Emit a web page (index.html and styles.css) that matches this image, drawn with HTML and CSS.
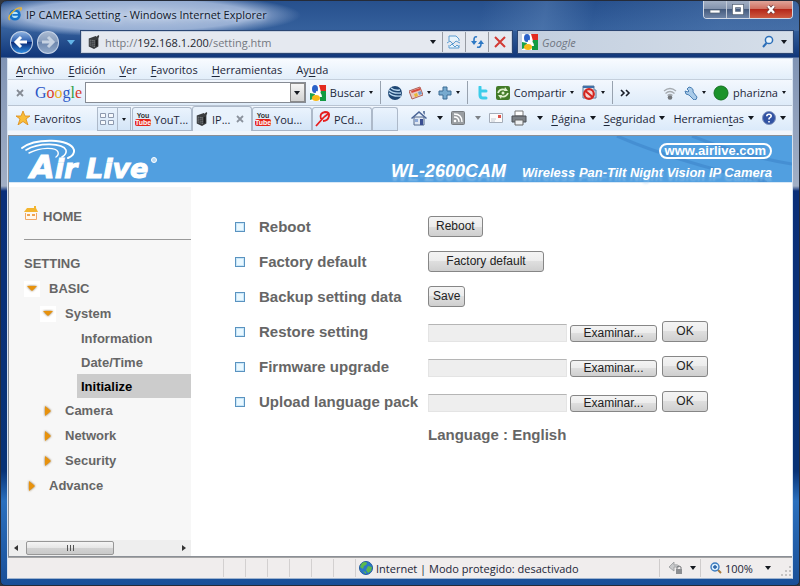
FILE: index.html
```
<!DOCTYPE html>
<html lang="es">
  <head>
    <meta charset="UTF-8" />
    <meta name="viewport" content="width=device-width, initial-scale=1.0" />
    <title>IP CAMERA Setting</title>
    <link rel="stylesheet" href="styles.css" />
  </head>

  <body>
    <!-- shared icons -->
    <svg class="sprite" aria-hidden="true">
      <symbol id="camera" viewBox="0 0 14 16">
        <path d="M1 4 9 1l1 1 2-2 1 1-1 3v9l-5 3-6-3z" fill="#3a3c3e" />
        <path d="M2 5l6 1v8l-6-2z" fill="#777b7e" />
        <path d="M2 7l6 1M2 9l6 1M2 11l6 1M4 5v8M6 6v8" stroke="#303234" stroke-width=".7" />
        <path d="M9 6l2-1v7l-2 1z" fill="#1d1e20" />
      </symbol>
      <symbol id="gicon" viewBox="0 0 16 16">
        <path d="M0 0h16v16H0z" fill="#fff" />
        <path d="M9 0h7v7h-5z" fill="#e32b20" />
        <path d="M11 6h5v10h-6V9z" fill="#129a42" />
        <path d="M0 8l5 1-2 5-3 1z" fill="#19a24c" />
        <ellipse cx="5" cy="4" rx="3" ry="4" fill="#2b62c9" />
        <ellipse cx="6" cy="13" rx="4" ry="3" fill="#f8b917" />
        <path d="M6 7q5 1 5 5" stroke="#fff" stroke-width="2" fill="none" />
      </symbol>
      <symbol id="box" viewBox="0 0 10 10">
        <rect x=".5" y=".5" width="9" height="9" fill="#c8e6f8" stroke="#5a93c0" />
        <path d="M2 2h6v6H2z" fill="#eaf8ff" />
      </symbol>
    </svg>

    <div class="window">
      <header class="titlebar">
        <svg class="i14" viewBox="0 0 16 16">
          <circle cx="8" cy="9" r="5" fill="#b9e4fb" stroke="#1673c8" stroke-width="3" />
          <path d="M5 9h9" stroke="#1673c8" stroke-width="2" />
          <path d="M2 15C-2 11 9 0 15 1q1 1-1 3" fill="none" stroke="#f0b72d" stroke-width="1.5" />
        </svg>
        <span class="title">IP CAMERA Setting - Windows Internet Explorer</span>
        <div class="controls">
          <button aria-label="Minimizar"><svg viewBox="0 0 12 12"><path d="M1 6h10v3H1z" fill="#fff" stroke="#526174" stroke-width=".7" /></svg></button>
          <button aria-label="Maximizar"><svg viewBox="0 0 12 12"><path d="M2 2h8v7H2z" fill="none" stroke="#526174" stroke-width="4" /><path d="M2 2h8v7H2z" fill="none" stroke="#fff" stroke-width="2.4" /></svg></button>
          <button class="close" aria-label="Cerrar"><svg viewBox="0 0 12 12"><path d="M3 2l6 7M9 2L3 9" stroke="#6e3a3a" stroke-width="4" /><path d="M3 2l6 7M9 2L3 9" stroke="#fff" stroke-width="2.4" /></svg></button>
        </div>
      </header>

      <div class="address-row">
        <div class="nav">
          <button class="back" aria-label="Atrás"><svg viewBox="0 0 16 16"><path d="M14 8H3M8 3L3 8l5 5" /></svg></button>
          <button class="forward" aria-label="Adelante"><svg viewBox="0 0 16 16"><path d="M2 8h11M8 3l5 5-5 5" /></svg></button>
          <i class="caret pale"></i>
        </div>
        <div class="address">
          <svg class="i14"><use href="#camera" /></svg>
          <span class="url">http://<b>192.168.1.200</b>/setting.htm</span>
          <i class="caret"></i>
          <button aria-label="Vista de compatibilidad"><svg class="i14" viewBox="0 0 14 14"><path d="M2 6V1h7l3 3v2M2 10v3h10v-3" fill="#e8f4fc" stroke="#5b9bd0" /><path d="M0 8l3-2 3 3 3-3 4 2" fill="none" stroke="#5b9bd0" /><path d="M3 11l2-2 3 3 2-2 2 2" fill="none" stroke="#5b9bd0" /></svg></button>
          <button aria-label="Actualizar"><svg class="i14" viewBox="0 0 14 14"><path d="M7 2Q4 1 4 5v2M7 12q4 1 4-3V8" fill="none" stroke="#2d78c4" stroke-width="1.6" /><path d="M1 6h6L4 10zM8 9h6l-3-4z" fill="#2d78c4" /></svg></button>
          <button aria-label="Detener"><svg class="i14" viewBox="0 0 14 14"><path d="M2 2l10 10M12 2L2 12" stroke="#d23a35" stroke-width="2" /></svg></button>
        </div>
        <div class="search">
          <svg class="i16"><use href="#gicon" /></svg>
          <input type="text" placeholder="Google" aria-label="Buscar" />
          <svg class="i14" viewBox="0 0 14 14"><circle cx="8" cy="5" r="3.6" fill="#e9f4fc" stroke="#2d6fb8" stroke-width="1.5" /><path d="M5.500 8L2 12" stroke="#2d6fb8" stroke-width="2" /></svg>
          <i class="caret"></i>
        </div>
      </div>

      <div class="client">
        <nav class="menu">
          <a href="#"><u>A</u>rchivo</a>
          <a href="#"><u>E</u>dición</a>
          <a href="#"><u>V</u>er</a>
          <a href="#"><u>F</u>avoritos</a>
          <a href="#"><u>H</u>erramientas</a>
          <a href="#">Ay<u>u</u>da</a>
        </nav>

        <div class="google-bar">
          <button class="bar-close" aria-label="Cerrar barra"><svg viewBox="0 0 8 8"><path d="M1 1l6 6M7 1L1 7" stroke="#858b94" stroke-width="1.8" /></svg></button>
          <span class="google"><span class="b">G</span><span class="r">o</span><span class="y">o</span><span class="b">g</span><span class="g">l</span><span class="r">e</span></span>
          <div class="combo">
            <input type="text" aria-label="Búsqueda de Google" />
            <button aria-label="Historial"><i class="caret"></i></button>
          </div>
          <button class="tool"><svg class="i16"><use href="#gicon" /></svg>Buscar<i class="caret small"></i></button>
          <span class="split"></span>
          <button class="tool" aria-label="Google Earth"><svg class="i14" viewBox="0 0 14 14"><circle cx="7" cy="7" r="7" fill="#1f4774" /><path d="M1 4q4 4 12 3M1 7q4 4 12 3M3 2q3 3 9 2" fill="none" stroke="#b8d6ee" stroke-width="1.3" /></svg></button>
          <button class="tool" aria-label="Noticias"><svg class="i14" viewBox="0 0 14 14"><path d="M0 5l11-4 3 8-11 4z" fill="#e8c8c0" stroke="#b2625a" /><path d="M2 5l9-3 .7 2-9 3z" fill="#d8483c" /><path d="M5 8l3-1 1 3-3 1z" fill="#e8b730" /><path d="M9 6l3-1 1 3-3 1z" fill="#729fd0" /></svg><i class="caret small"></i></button>
          <button class="tool" aria-label="Agregar"><svg class="i14" viewBox="0 0 14 14"><path d="M5 1h4v4h4v4H9v4H5V9H1V5h4z" fill="#77aacf" stroke="#3c6d95" /></svg><i class="caret small"></i></button>
          <span class="sep"></span>
          <button class="tool" aria-label="Twitter"><svg class="i14" viewBox="0 0 14 14"><path d="M5 1v8q0 3 3 3h3M5 5h6" fill="none" stroke="#3ccdea" stroke-width="3" stroke-linecap="round" /></svg></button>
          <button class="tool"><svg class="i14" viewBox="0 0 14 14"><rect width="14" height="14" rx="2" fill="#437b28" /><path d="M2 7q2-5 8-3M12 7q-2 5-8 3" fill="none" stroke="#dff1cd" stroke-width="1.8" /><path d="M9 1l3 4H8zM5 13L2 9h4z" fill="#dff1cd" /><circle cx="7" cy="7" r="1.500" fill="#dff1cd" /></svg>Compartir<i class="caret small"></i></button>
          <button class="tool" aria-label="Bloqueador"><svg class="i16" viewBox="0 0 16 16"><path d="M2 1h11v4h2v8H2z" fill="#dbe8f3" stroke="#5a7898" /><path d="M2 1h11v2H2z" fill="#3e6fa8" /><circle cx="8" cy="9" r="4.800" fill="#f6d5d2" stroke="#d42620" stroke-width="2.200" /><path d="M4.500 6l7 6" stroke="#d42620" stroke-width="2.200" /></svg><i class="caret small"></i></button>
          <span class="sep"></span>
          <button class="more" aria-label="Más"><svg viewBox="0 0 12 8"><path d="M1 1l3 3-3 3M6 1l3 3-3 3" fill="none" stroke="#1b1f28" stroke-width="1.600" /></svg></button>
          <div class="account">
            <svg class="i14" viewBox="0 0 14 14"><path d="M1 5q6-5 12 0M2.500 7.500q4.500-4 9 0M4.500 9.500q2.500-2 5 0" fill="none" stroke="#a6abb0" stroke-width="1.300" /><circle cx="7" cy="11.500" r="2.300" fill="#73777b" /></svg>
            <button class="tool" aria-label="Opciones"><svg class="i14" viewBox="0 0 14 14"><path d="M5 1L3 3l2 2-1 1-3-1Q1 9 5 9l5 5q3 0 3-3L9 6q1-4-4-5z" fill="#a9cbe9" stroke="#4a7fb4" /></svg><i class="caret small"></i></button>
            <button class="tool"><svg class="i16" viewBox="0 0 16 16"><circle cx="8" cy="8" r="7" fill="#1b932b" stroke="#137020" /></svg>pharizna<i class="caret small"></i></button>
          </div>
        </div>

        <div class="tab-bar">
          <button class="favorites"><svg class="i14" viewBox="0 0 14 14"><path d="M7 0l2 5h5l-4 3 2 6-5-3.500L2 14l2-6-4-3h5z" fill="#f9bd38" stroke="#dc8a17" stroke-width=".8" /></svg>Favoritos</button>
          <div class="tabs">
            <button class="quick" aria-label="Pestañas rápidas"><svg class="i14" viewBox="0 0 14 14"><path d="M.5 1.500h5v4h-5zM8.500 1.500h5v4h-5zM.5 8.500h5v4h-5zM8.500 8.500h5v4h-5z" fill="#f6f9fd" stroke="#8d99ae" /></svg></button>
            <button class="quick-list" aria-label="Lista de pestañas"><i class="caret small"></i></button>
            <button class="tab"><span class="yt"><span>You</span><b>Tube</b></span>YouT...</button>
            <button class="tab active"><svg class="i14"><use href="#camera" /></svg>IP...<svg class="tab-x" viewBox="0 0 8 8"><path d="M1 1l6 6M7 1L1 7" stroke="#8b929d" stroke-width="1.800" /></svg></button>
            <button class="tab"><span class="yt"><span>You</span><b>Tube</b></span>You...</button>
            <button class="tab"><svg class="i16" viewBox="0 0 16 16"><path d="M1 15L9 6M6 8Q4 2 10 1q5 0 4 4-1 5-6 5M9 6l4-3" fill="none" stroke="#e61e1e" stroke-width="1.800" /></svg>PCd...</button>
            <button class="tab new" aria-label="Nueva pestaña"></button>
          </div>
          <div class="commands">
            <button class="tool wide" aria-label="Página principal"><svg class="i16" viewBox="0 0 16 16"><path d="M3 7h10v8H3z" fill="#dfe7f2" stroke="#52688c" /><path d="M0 8l8-7 8 7-1 1-7-6-7 6z" fill="#4b6597" /><path d="M9 9h3v6H9z" fill="#394e92" /><path d="M4 9h3v3H4z" fill="#8ea9d8" /><path d="M12 1h2v4l-2-2z" fill="#6c83aa" /></svg><i class="caret"></i></button>
            <button class="tool wide" aria-label="Fuentes"><svg class="i14" viewBox="0 0 14 14"><rect x=".5" y=".5" width="13" height="13" rx="1" fill="#9a9ea2" stroke="#787c80" /><circle cx="4" cy="10" r="1.300" fill="#fff" /><path d="M3 6q5 0 5 5M3 3q8 0 8 8" fill="none" stroke="#fff" stroke-width="1.400" /></svg><i class="caret grey"></i></button>
            <button class="tool mail" aria-label="Leer correo"><svg class="i14" viewBox="0 0 14 14"><path d="M.5 2.500h13v9H.5z" fill="#fbfbfc" stroke="#a4acb8" /><path d="M9 4h3v3H9z" fill="#dc5148" /><path d="M2 8h5M2 10h4" stroke="#c4cad2" /></svg></button>
            <button class="tool wide" aria-label="Imprimir"><svg class="i16" viewBox="0 0 16 16"><path d="M4 1h8v5H4z" fill="#fff" stroke="#777" /><path d="M1 6h14v6H1z" fill="#7c8187" stroke="#4b4f54" /><path d="M4 10h8v5H4z" fill="#eef0f2" stroke="#666" /></svg><i class="caret"></i></button>
            <button class="tool"><span><u>P</u>ágina</span><i class="caret"></i></button>
            <button class="tool"><span><u>S</u>eguridad</span><i class="caret"></i></button>
            <button class="tool"><span>Herramien<u>t</u>as</span><i class="caret"></i></button>
            <button class="tool" aria-label="Ayuda"><svg class="i14" viewBox="0 0 14 14"><circle cx="7" cy="7" r="6.500" fill="#3152a3" stroke="#8193bc" /><path d="M4.800 5.200q0-2 2.200-2t2.200 1.800q0 1-1.200 1.600T7 8.500M7 10v1.600" fill="none" stroke="#fff" stroke-width="1.600" /></svg><i class="caret"></i></button>
          </div>
        </div>

        <div class="page">
          <header class="banner">
            <svg class="logo" viewBox="0 0 160 46" role="img" aria-label="Air Live">
              <g fill="none" stroke="#fff" stroke-linecap="round">
                <path d="M13 12C26 2 62 2 65 14q1 5-6 8" stroke-width="2" />
                <path d="M17 14C30 6 54 7 57 14q1 4-4 7" stroke-width="1.600" />
                <path d="M20 17C32 11 47 11 49 16q1 3-2 5" stroke-width="1.400" />
              </g>
              <text class="logo-text" x="21" y="42"><tspan class="logo-a">A</tspan>ir</text>
              <text class="logo-text" x="77" y="42">Live</text>
              <circle cx="145" cy="24" r="2.500" fill="#b9d9f3" stroke="#fff" />
            </svg>
            <svg class="streaks" viewBox="0 0 180 46" preserveAspectRatio="none">
              <path d="M5 0q60 26 150 46M80 0q50 20 100 28" fill="none" stroke="#3a80c6" stroke-width="3" opacity=".5" />
            </svg>
            <div class="product">
              <a class="site" href="#">www.airlive.com</a>
              <div class="model"><strong>WL-2600CAM</strong><span>Wireless Pan-Tilt Night Vision IP Camera</span></div>
            </div>
          </header>

          <div class="content">
            <aside class="sidebar">
              <a class="home" href="#">
                <svg class="i14" viewBox="0 0 14 14"><path d="M0 6l3-4h7V0h2v2l2 4z" fill="#f3b52f" /><path d="M1.500 7v6.500h11V7" fill="#fff8ec" stroke="#f0a868" /><path d="M3 8h3v2H3zM8 8h3v2H8z" fill="#efa350" /></svg>
                HOME
              </a>
              <ul class="tree">
                <li>SETTING</li>
                <li class="l1"><i class="mark open"></i><a href="#">BASIC</a></li>
                <li class="l2"><i class="mark open"></i><a href="#">System</a></li>
                <li class="l3"><a href="#">Information</a></li>
                <li class="l3"><a href="#">Date/Time</a></li>
                <li class="l3 current"><a href="#">Initialize</a></li>
                <li class="l2"><i class="mark"></i><a href="#">Camera</a></li>
                <li class="l2"><i class="mark"></i><a href="#">Network</a></li>
                <li class="l2"><i class="mark"></i><a href="#">Security</a></li>
                <li class="l1"><i class="mark"></i><a href="#">Advance</a></li>
              </ul>
              <div class="scrollbar">
                <i class="arrow left"></i>
                <div class="thumb"><i></i><i></i><i></i></div>
                <i class="arrow right"></i>
              </div>
            </aside>

            <main class="settings">
              <div class="row">
                <svg class="i10"><use href="#box" /></svg>
                <span class="name">Reboot</span>
                <button class="btn">Reboot</button>
              </div>
              <div class="row">
                <svg class="i10"><use href="#box" /></svg>
                <span class="name">Factory default</span>
                <button class="btn btn-wide">Factory default</button>
              </div>
              <div class="row">
                <svg class="i10"><use href="#box" /></svg>
                <span class="name">Backup setting data</span>
                <button class="btn btn-tight">Save</button>
              </div>
              <form class="row">
                <svg class="i10"><use href="#box" /></svg>
                <label class="name" for="restore">Restore setting</label>
                <input class="file" id="restore" type="text" readonly />
                <button class="browse" type="button">Examinar...</button>
                <button class="btn btn-ok" type="button">OK</button>
              </form>
              <form class="row">
                <svg class="i10"><use href="#box" /></svg>
                <label class="name" for="firmware">Firmware upgrade</label>
                <input class="file" id="firmware" type="text" readonly />
                <button class="browse" type="button">Examinar...</button>
                <button class="btn btn-ok" type="button">OK</button>
              </form>
              <form class="row">
                <svg class="i10"><use href="#box" /></svg>
                <label class="name" for="language">Upload language pack</label>
                <input class="file" id="language" type="text" readonly />
                <button class="browse" type="button">Examinar...</button>
                <button class="btn btn-ok" type="button">OK</button>
              </form>
              <p class="language">Language : English</p>
            </main>
          </div>
        </div>

        <footer class="status">
          <div class="cells"><i></i><i></i><i></i><i></i><i></i><i></i><i></i></div>
          <div class="zone">
            <svg class="i14" viewBox="0 0 14 14"><circle cx="7" cy="7" r="6.500" fill="#2a76c8" stroke="#205a9c" /><path d="M3 2q4-2 5 0 0 2-3 3L4 8 1 6zM9 5l4 1-1 4-3 2-2-3zM4 10l3 1v2z" fill="#5cb94b" /></svg>
            Internet | Modo protegido: desactivado
          </div>
          <button class="tool privacy" aria-label="Privacidad"><svg class="i14" viewBox="0 0 14 14"><path d="M0 6l5-5v3q5-1 5 2H5v4z" fill="#c8c9cb" stroke="#97999c" stroke-width=".8" /><path d="M7 8h6v5H7z" fill="#8c8e91" /><path d="M8 8V6q2-2 4 0v2" fill="none" stroke="#77797c" /></svg><i class="caret"></i></button>
          <button class="tool zoom"><svg class="i12" viewBox="0 0 12 12"><path d="M7 7l4 4" stroke="#a87b3e" stroke-width="2" /><circle cx="5" cy="5" r="4" fill="#d9edfb" stroke="#3c7cc0" stroke-width="1.400" /><path d="M3 5h4M5 3v4" stroke="#245fa6" stroke-width="1.400" /></svg>100%<i class="caret"></i></button>
          <svg class="grip" viewBox="0 0 10 10"><path d="M8 0h2v2H8zM4 4h2v2H4zM8 4h2v2H8zM0 8h2v2H0zM4 8h2v2H4zM8 8h2v2H8z" fill="#c5c3c3" /></svg>
        </footer>
      </div>
    </div>
  </body>
</html>
```
FILE: styles.css
```
* {
  box-sizing: border-box;
}
body {
  margin: 0;
  min-height: 100vh;
  display: flex;
  background: #33363c;
  font: 11px 'Open Sans', 'Noto Sans', sans-serif;
  color: #1c2638;
}
button {
  font: inherit;
  color: inherit;
  background: none;
  border: 0;
  padding: 0;
}
input {
  font: inherit;
  min-width: 0;
}
a {
  color: inherit;
  text-decoration: none;
}
u {
  text-underline-offset: 2px;
}
svg {
  display: block;
  flex: none;
}
.sprite {
  position: absolute;
  width: 0;
  height: 0;
}
.i10 { width: 10px; height: 10px; }
.i12 { width: 12px; height: 12px; }
.i14 { width: 14px; height: 14px; }
.i16 { width: 16px; height: 16px; }

.caret {
  flex: none;
  border: solid transparent;
  border-width: 4px 3px 0;
  border-top-color: #14181f;
}
.caret.small { border-width: 3px 2px 0; }
.caret.grey { border-top-color: #7d8186; }
.caret.pale { border-width: 5px 4px 0; border-top-color: #64b4e8; }

/* window frame */
.window {
  flex: 1;
  min-width: 0;
  display: flex;
  flex-direction: column;
  padding: 0 6px 6px;
  border: 1px solid #252b38;
  border-radius: 7px 7px 5px 5px;
  background:
    radial-gradient(closest-side, #c3d1e8ee, #b0c3e2cc 70%, transparent) -30px -8px / 330px 44px no-repeat,
    linear-gradient(100deg, transparent 60%, #6f95c555 68%, transparent 74%, #6f95c544 90%) 0 0 / 100% 30px no-repeat,
    linear-gradient(180deg, #27508d 0, #35609c 28px, #11377a 56px, transparent 57px),
    linear-gradient(180deg, #7188ae 0, #a2afc5 185px, #0a2f79 190px, #073276 470px, #2b70be 500px, #194f98 100%);
}
.titlebar {
  display: flex;
  align-items: center;
  gap: 4px;
  height: 26px;
  padding-left: 1px;
}
.title {
  flex: 1;
  white-space: nowrap;
  color: #10182a;
  text-shadow: 0 0 6px #dce7f8, 0 0 3px #c5d4ec;
}
.controls {
  align-self: flex-start;
  display: flex;
  height: 18px;
  border: 1px solid #d0d8e5;
  border-top: 0;
  border-radius: 0 0 4px 4px;
  overflow: hidden;
}
.controls button {
  width: 23px;
  display: grid;
  place-items: center;
  border-right: 1px solid #c2cad7;
  background: linear-gradient(#a3b0c4, #7f90ab 50%, #455b7e 50%, #6e84a6);
}
.controls svg {
  width: 12px;
  height: 12px;
}
.controls .close {
  width: 42px;
  border: 0;
  background: linear-gradient(#e0a499, #cf6c5c 50%, #b5281a 50%, #cd5a40);
}

.address-row {
  display: flex;
  align-items: center;
  gap: 6px;
  height: 30px;
  margin-bottom: 1px;
}
.nav {
  display: flex;
  align-items: center;
  gap: 4px;
  width: 68px;
  padding-left: 3px;
}
.nav button {
  display: grid;
  place-items: center;
  width: 23px;
  height: 23px;
  border-radius: 50%;
  border: 1px solid #c5d3e8;
}
.nav svg {
  width: 16px;
  height: 16px;
  fill: none;
  stroke: #fff;
  stroke-width: 3;
}
.nav .back { background: linear-gradient(#8eb2e0, #2458ac 48%, #0b2c78 50%, #2f8ce0); }
.nav .forward { background: linear-gradient(#a9b9d0, #8299bb 50%, #6d87ae 50%, #93abcb); }
.nav .forward svg { stroke: #c6d2e2; }
.nav .caret { margin-left: 4px; }
.address,
.search {
  display: flex;
  align-items: center;
  height: 22px;
  border: 1px solid #c5cfdf;
  outline: 1px solid #2b4673;
}
.address {
  flex: 8;
  gap: 4px;
  padding-left: 5px;
  background: #e5e9f0;
}
.url {
  flex: 1;
  color: #74787f;
}
.url b {
  font-weight: normal;
  color: #22262e;
}
.address button {
  display: grid;
  place-items: center;
  align-self: stretch;
  width: 23px;
  margin-right: -4px;
  border-left: 1px solid #979ba3;
}
.address button:last-child { margin-right: 0; }
.address .caret { margin-right: 2px; }
.search {
  flex: 5;
  gap: 4px;
  padding: 0 5px 0 3px;
  background: linear-gradient(90deg, #c3cfdf, #d5dee9);
}
.search input {
  flex: 1;
  border: 0;
  padding: 0;
  background: none;
}
.search input::placeholder {
  font-style: italic;
  color: #6f7580;
}
.search .caret { margin-left: 2px; }

/* toolbars */
.client {
  flex: 1;
  display: flex;
  flex-direction: column;
  border: 1px solid #d6e2f0;
  border-bottom-color: #9fb4cf;
  background: #e6f1fc;
}
.menu {
  display: flex;
  align-items: center;
  gap: 14px;
  height: 21px;
  padding-left: 8px;
  background: linear-gradient(#f8fbff, #e2eefa);
  border-bottom: 1px solid #c4cfdc;
}
.tool {
  display: flex;
  align-items: center;
  gap: 4px;
  white-space: nowrap;
}
.google-bar {
  display: flex;
  align-items: center;
  gap: 7px;
  height: 26px;
  padding: 0 6px 0 8px;
  background: linear-gradient(#f3f8fe, #deebf9);
  border-bottom: 1px solid #b9c4d2;
}
.bar-close svg,
.tab-x {
  width: 8px;
  height: 8px;
}
.google {
  margin-left: 4px;
  font: 16px 'Liberation Serif', serif;
}
.google .b { color: #2a56c6; }
.google .r { color: #d83a2c; }
.google .y { color: #ecb01e; }
.google .g { color: #2b9c46; }
.combo {
  flex: 1;
  display: flex;
  height: 21px;
  margin-left: -4px;
  margin-right: -3px;
  border: 1px solid #868b94;
  background: #fff;
}
.combo input {
  flex: 1;
  border: 0;
  padding: 0 4px;
}
.combo button {
  display: grid;
  place-items: center;
  width: 15px;
  border: 1px solid #8b8b8b;
  background: linear-gradient(#f5f5f5, #d2d2d2);
}
.split,
.sep {
  width: 1px;
  height: 23px;
  background: #98a2af;
}
.more svg {
  width: 12px;
  height: 8px;
}
.account {
  display: flex;
  align-items: center;
  gap: 7px;
  margin-left: 24px;
}
.tab-bar {
  display: flex;
  height: 29px;
  background: linear-gradient(#f1f7fe, #dbeafa 24px, #f2f6fb 25px);
}
.favorites {
  display: flex;
  align-items: center;
  gap: 4px;
  width: 89px;
  height: 24px;
  padding-left: 8px;
}
.tabs {
  display: flex;
  align-items: flex-end;
  height: 25px;
  border-bottom: 1px solid #a9b5c6;
}
.tabs button {
  display: flex;
  align-items: center;
  gap: 3px;
  height: 23px;
  padding-left: 2px;
  white-space: nowrap;
  border: 1px solid #adb9c9;
  border-bottom: 0;
  background: linear-gradient(#eaf3fd, #d4e5f7);
}
.tabs .quick {
  width: 21px;
}
.tabs .quick-list {
  width: 13px;
  margin-right: 1px;
  border-left: 0;
  justify-content: center;
  padding: 0;
}
.tabs .tab {
  width: 60px;
  border-radius: 3px 3px 0 0;
}
.tabs .active {
  height: 25px;
  margin-bottom: -1px;
  background: #e9f2fc;
}
.tab-x {
  margin-left: 3px;
}
.tabs .new {
  width: 26px;
}
.yt {
  width: 16px;
  text-align: center;
  font: bold 7px 'Liberation Sans', sans-serif;
  color: #333;
}
.yt span,
.yt b {
  display: block;
}
.yt b {
  border-radius: 2px;
  background: #e5261f;
  color: #fff;
}
.commands {
  flex: 1;
  display: flex;
  align-items: center;
  justify-content: flex-end;
  gap: 8px;
  height: 24px;
  padding-right: 6px;
}
.commands .wide {
  gap: 10px;
}

/* camera page */
.page {
  flex: 1;
  display: flex;
  flex-direction: column;
  border: 1px solid #8b8f96;
  border-right: 0;
  background: #fff;
}
.banner {
  position: relative;
  display: flex;
  justify-content: space-between;
  height: 47px;
  border-bottom: 1px solid #d8e8f6;
  background: #519fe0;
  color: #fff;
  font-family: 'Liberation Sans', Arial, sans-serif;
}
.logo {
  width: 160px;
  height: 46px;
}
.logo text {
  fill: #fff;
  stroke: #fff;
  font-family: 'DejaVu Sans', sans-serif;
  font-weight: bold;
  font-style: italic;
}
.logo-text { font-size: 27px; }
.logo-a { font-size: 32px; }
.streaks {
  position: absolute;
  right: 0;
  width: 180px;
  height: 46px;
}
.product {
  position: relative;
  display: flex;
  flex-direction: column;
  align-items: flex-end;
  gap: 3px;
  padding: 7px 20px 0 0;
}
.site {
  padding: 0 4px;
  border: 2px solid #fff;
  border-radius: 8px;
  font-size: 13px;
  font-weight: bold;
  line-height: 12px;
}
.model {
  display: flex;
  align-items: baseline;
  gap: 16px;
  font-size: 13px;
  font-weight: bold;
  font-style: italic;
  line-height: 18px;
  text-shadow: 0 4px 2px #a5cdf077;
}
.model strong {
  font-size: 18px;
}

.content {
  flex: 1;
  display: flex;
  font-family: 'Liberation Sans', Arial, sans-serif;
}
.sidebar {
  display: flex;
  flex-direction: column;
  width: 182px;
  margin-top: 4px;
  background: #f7f7f7;
  color: #666;
  font-size: 13px;
  font-weight: bold;
}
.home {
  display: flex;
  align-items: center;
  gap: 5px;
  height: 53px;
  margin-left: 15px;
  padding-top: 6px;
  border-bottom: 1px solid #999;
}
.home svg {
  margin-bottom: 6px;
}
.tree {
  flex: 1;
  list-style: none;
  margin: 11px 0 0;
  padding: 0 0 0 15px;
}
.tree li {
  display: flex;
  align-items: center;
  height: 25px;
}
.tree .l2 { padding-left: 16px; }
.tree .l3 {
  height: 24px;
  margin-left: 53px;
  padding-left: 4px;
}
.tree .current {
  background: #ccc;
  color: #000;
}
.mark {
  width: 16px;
  height: 16px;
  margin-right: 9px;
  display: grid;
  place-items: center;
}
.mark::before {
  content: '';
  border: solid transparent;
  border-width: 5px 0 5px 6px;
  border-left-color: #e8920c;
  filter: drop-shadow(0 0 1px #7a5a28);
}
.mark.open {
  background: #fff;
}
.mark.open::before {
  border-width: 5px 5px 0;
  border-color: #e8920c transparent transparent;
}
.scrollbar {
  display: flex;
  align-items: center;
  gap: 8px;
  height: 16px;
  padding: 0 5px;
  background: #eee;
}
.arrow {
  border: solid transparent;
  border-width: 3px 4px 3px 0;
  border-right-color: #333;
}
.arrow.right {
  margin-left: auto;
  border-width: 3px 0 3px 4px;
  border-left-color: #333;
}
.thumb {
  display: flex;
  align-items: center;
  justify-content: center;
  gap: 2px;
  width: 88px;
  height: 14px;
  border: 1px solid #979797;
  border-radius: 2px;
  background: linear-gradient(#f5f5f5, #e6e6e6 50%, #d2d2d2 50%, #c9c9c9);
}
.thumb i {
  width: 1px;
  height: 6px;
  background: #555;
}

.settings {
  flex: 1;
  padding: 26px 0 0 44px;
  color: #666;
  font-size: 15px;
  font-weight: bold;
}
.row {
  display: flex;
  align-items: center;
  height: 35px;
}
.name {
  width: 169px;
  margin-left: 14px;
}
.btn,
.browse {
  height: 21px;
  padding: 0 7px;
  border: 1px solid #868686;
  border-radius: 3px;
  background: linear-gradient(#f4f4f4, #ececec 50%, #dedede 50%, #cfcfcf);
  color: #222;
  font-size: 12px;
  font-weight: normal;
  line-height: 17px;
}
.btn-wide { width: 116px; }
.btn-tight { padding: 0 4px; }
.btn-ok {
  width: 46px;
  margin-left: 5px;
}
.browse {
  width: 87px;
  height: 17px;
  margin: 3px 0 0 3px;
  line-height: 15px;
}
.file {
  width: 139px;
  height: 18px;
  margin-top: 3px;
  border: 1px solid #e4e4e4;
  border-top-color: #b5b5b5;
  background: #eee;
}
.language {
  margin: 0 0 0 193px;
  line-height: 32px;
}

/* status bar */
.status {
  display: flex;
  align-items: center;
  height: 21px;
  padding-right: 1px;
  border-top: 1px solid #a5a5a5;
  background: #f0eded;
}
.cells {
  display: flex;
  gap: 21px;
  margin-left: 215px;
}
.cells i {
  width: 1px;
  height: 18px;
  background: #d3d0d0;
}
.zone {
  flex: 1;
  display: flex;
  align-items: center;
  gap: 3px;
  padding-left: 3px;
}
.privacy,
.zoom {
  height: 18px;
  border-left: 1px solid #cfcccc;
}
.privacy {
  gap: 7px;
  width: 41px;
  padding-left: 9px;
}
.zoom {
  gap: 3px;
  width: 78px;
  padding-left: 9px;
}
.zoom .caret {
  margin-left: auto;
  margin-right: 7px;
}
.grip {
  align-self: flex-end;
  width: 10px;
  height: 10px;
  margin: 0 0 2px 3px;
}
```
